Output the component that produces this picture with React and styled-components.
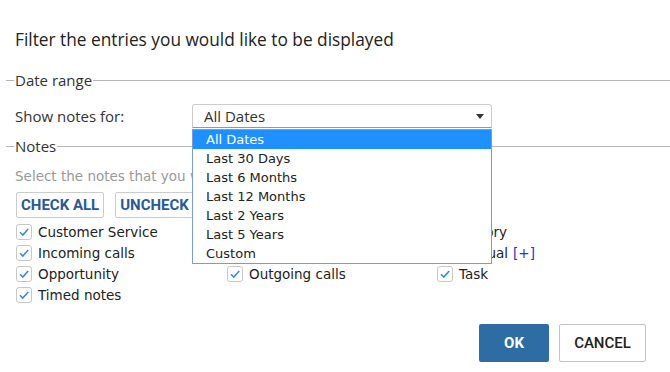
import React from "react";
import styled, { createGlobalStyle } from "styled-components";

const GlobalStyle = createGlobalStyle`
  body {
    margin: 0;
    background: #fff;
    font-family: "Open Sans", "Noto Sans", sans-serif;
    color: #333;
  }
`;

const dateOptions = [
  "All Dates",
  "Last 30 Days",
  "Last 6 Months",
  "Last 12 Months",
  "Last 2 Years",
  "Last 5 Years",
  "Custom",
];

const notes = [
  { label: "Customer Service" },
  { label: "General" },
  { label: "History" },
  { label: "Incoming calls" },
  { label: "Internal" },
  { label: "Manual", extra: true },
  { label: "Opportunity" },
  { label: "Outgoing calls" },
  { label: "Task" },
  { label: "Timed notes" },
];

const App = () => {
  return (
    <>
      <GlobalStyle />
      <Dialog>
        <Title>Filter the entries you would like to be displayed</Title>

        <Legend $gap={18}>Date range</Legend>
        <FieldRow>
          <FieldLabel>Show notes for:</FieldLabel>
          <SelectWrap>
            <Select>
              <span>All Dates</span>
              <Caret />
            </Select>
            <OptionList>
              {dateOptions.map((opt, i) => (
                <Option key={opt} $active={i === 0}>
                  {opt}
                </Option>
              ))}
            </OptionList>
          </SelectWrap>
        </FieldRow>

        <Legend $gap={8}>Notes</Legend>
        <Hint>Select the notes that you would like to be displayed</Hint>
        <ButtonRow>
          <SmallButton>CHECK ALL</SmallButton>
          <SmallButton>UNCHECK ALL</SmallButton>
        </ButtonRow>
        <NoteGrid>
          {notes.map((n) => (
            <NoteItem key={n.label}>
              <CheckBox>
                <svg width="12" height="12" viewBox="0 0 12 12">
                  <path
                    d="M2 6.2 L4.8 9 L10.2 3"
                    fill="none"
                    stroke="#3d8ad6"
                    strokeWidth="1.6"
                  />
                </svg>
              </CheckBox>
              {n.label}
              {n.extra && <PlusLink>[+]</PlusLink>}
            </NoteItem>
          ))}
        </NoteGrid>

        <Footer>
          <OkButton>OK</OkButton>
          <CancelButton>CANCEL</CancelButton>
        </Footer>
      </Dialog>
    </>
  );
};

const Dialog = styled.div`
  width: 670px;
  height: 372px;
  box-sizing: border-box;
  padding-top: 28px;
  position: relative;
`;

const Title = styled.div`
  padding-left: 15px;
  font-size: 17.3px;
  line-height: 24px;
  color: #222;
`;

const Legend = styled.div`
  display: flex;
  align-items: center;
  font-size: 15px;
  line-height: 20px;
  color: #333;
  margin-top: ${(p) => p.$gap}px;

  &::before {
    content: "";
    width: 8px;
    height: 1px;
    background: #b5b5b5;
    margin-left: 6px;
    margin-right: 1px;
  }

  &::after {
    content: "";
    flex: 1;
    height: 1px;
    background: #b5b5b5;
    margin-left: 1px;
  }
`;

const FieldRow = styled.div`
  display: flex;
  align-items: center;
  margin-top: 14px;
  padding-left: 15px;
`;

const FieldLabel = styled.div`
  width: 177px;
  font-size: 15px;
  color: #333;
`;

const SelectWrap = styled.div`
  position: relative;
  width: 300px;
`;

const Select = styled.div`
  height: 24px;
  box-sizing: border-box;
  border: 1px solid #ccc;
  border-bottom-color: #7a9cd3;
  border-radius: 3px 3px 0 0;
  display: flex;
  align-items: center;
  justify-content: space-between;
  padding: 0 7px 0 11px;
  font-size: 15px;
  color: #333;
`;

const Caret = styled.span`
  width: 0;
  height: 0;
  border-left: 4.5px solid transparent;
  border-right: 4.5px solid transparent;
  border-top: 5px solid #333;
`;

const OptionList = styled.div`
  position: absolute;
  top: 25px;
  left: 0;
  width: 300px;
  box-sizing: border-box;
  border: 1px solid #7a9cd3;
  background: #fff;
  z-index: 5;
`;

const Option = styled.div`
  height: 19px;
  line-height: 19px;
  padding-left: 13px;
  font-family: "DejaVu Sans", Verdana, sans-serif;
  font-size: 13px;
  color: ${(p) => (p.$active ? "#fff" : "#222")};
  background: ${(p) => (p.$active ? "#1e90ff" : "transparent")};
`;

const Hint = styled.div`
  padding-left: 15px;
  margin-top: 11px;
  line-height: 18px;
  font-family: "DejaVu Sans", Verdana, sans-serif;
  font-size: 13.5px;
  color: #999;
`;

const ButtonRow = styled.div`
  display: flex;
  gap: 11px;
  padding-left: 16px;
  margin-top: 7px;
`;

const SmallButton = styled.button`
  height: 26px;
  padding: 0 4px;
  background: #fff;
  border: 1px solid #ccc;
  border-radius: 2px;
  font-family: Roboto, "Liberation Sans", sans-serif;
  font-weight: 700;
  font-size: 15px;
  color: #285a94;
`;

const NoteGrid = styled.div`
  display: grid;
  grid-template-columns: 211px 210px 200px;
  padding-left: 16px;
  margin-top: 3px;
`;

const NoteItem = styled.div`
  display: flex;
  align-items: center;
  height: 21px;
  font-family: "DejaVu Sans", Verdana, sans-serif;
  font-size: 13.5px;
  color: #222;
`;

const CheckBox = styled.span`
  width: 14px;
  height: 14px;
  border: 1px solid #c8c8c8;
  border-radius: 3px;
  display: inline-flex;
  align-items: center;
  justify-content: center;
  margin-right: 6px;
`;

const PlusLink = styled.span`
  color: #2e2ebf;
  margin-left: 5px;
`;

const Footer = styled.div`
  display: flex;
  justify-content: flex-end;
  gap: 10px;
  padding-right: 24px;
  margin-top: 19px;
`;

const OkButton = styled.button`
  width: 70px;
  height: 38px;
  border: none;
  border-radius: 2px;
  background: #2e6da4;
  color: #fff;
  font-family: Roboto, "Liberation Sans", sans-serif;
  font-weight: 700;
  font-size: 15px;
`;

const CancelButton = styled.button`
  width: 87px;
  height: 38px;
  border: 1px solid #c4c4c4;
  border-radius: 2px;
  background: #fff;
  color: #222;
  font-family: Roboto, "Liberation Sans", sans-serif;
  font-weight: 500;
  font-size: 15px;
`;

export default App;
